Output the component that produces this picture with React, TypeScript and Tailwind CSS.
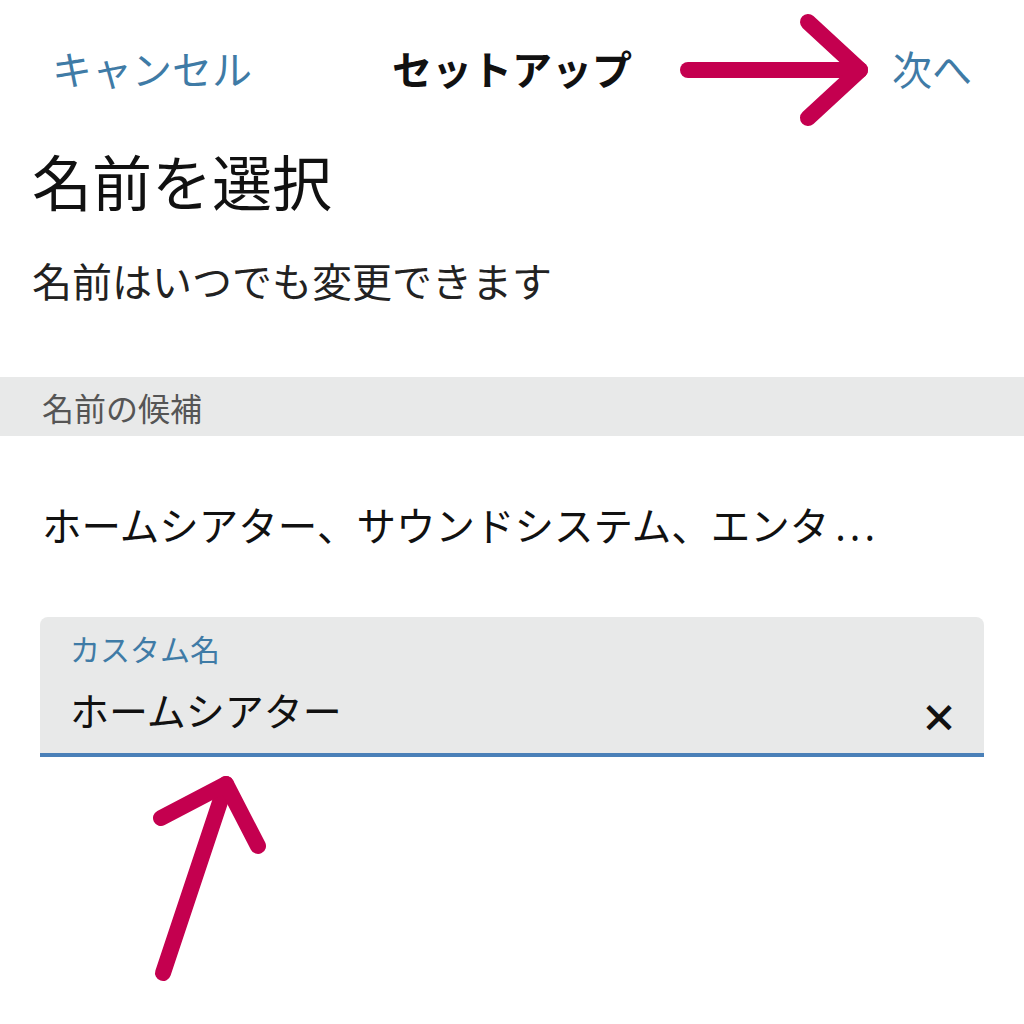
import React from "react";

export default function App() {
  const font = { fontFamily: '"Noto Sans CJK JP", "Noto Sans", sans-serif' };
  return (
    <div className="relative w-[1024px] h-[1024px] bg-white overflow-hidden" style={font}>
      <div className="grid grid-cols-[1fr_auto_1fr] items-center px-[52px] h-[136px]">
        <div className="text-[40px] text-[#3f7ba6] leading-none">キャンセル</div>
        <div className="text-[40px] font-bold text-[#111] leading-none">セットアップ</div>
        <div className="text-[40px] text-[#3f7ba6] leading-none justify-self-end">次へ</div>
      </div>
      <div className="px-8">
        <h1 className="text-[60px] leading-none text-[#111] mt-[14px]">名前を選択</h1>
        <p className="text-[40px] leading-none text-[#222] mt-[50px]">名前はいつでも変更できます</p>
      </div>
      <div className="mt-[77px] h-[59px] bg-[#e8e9e9] flex items-center px-[42px]">
        <span className="text-[32px] text-[#555] leading-none">名前の候補</span>
      </div>
      <div className="px-[42px] mt-[68px]">
        <p className="text-[39.5px] leading-none text-[#111] whitespace-nowrap">
          ホームシアター、サウンドシステム、エンタ
          <span className="font-['Noto_Sans',sans-serif] ml-[6px] tracking-[4px]">...</span>
        </p>
      </div>
      <div className="mx-[40px] mt-[70px] h-[140px] bg-[#e8e9e9] rounded-t-[8px] border-b-[4px] border-[#4a80b8] flex flex-col px-[30px] pt-[16px] relative">
        <span className="text-[30px] leading-none text-[#3f7ba6]">カスタム名</span>
        <div className="flex items-center justify-between mt-[22px]">
          <span className="text-[39px] leading-none text-[#111]">ホームシアター</span>
          <span className="text-[38px] font-black leading-none text-[#111] mr-[-4px] mt-[12px]">×</span>
        </div>
      </div>
      <svg className="absolute left-0 top-0" width="1024" height="1024" viewBox="0 0 1024 1024" fill="none">
        <g stroke="#c4004f" strokeWidth="16" strokeLinecap="round" strokeLinejoin="round">
          <path d="M688 70 L860 70" />
          <path d="M808 22 L860 70 L808 118" />
          <path d="M163 973 L226 784" />
          <path d="M161 818 L226 784 L258 846" />
        </g>
      </svg>
    </div>
  );
}
